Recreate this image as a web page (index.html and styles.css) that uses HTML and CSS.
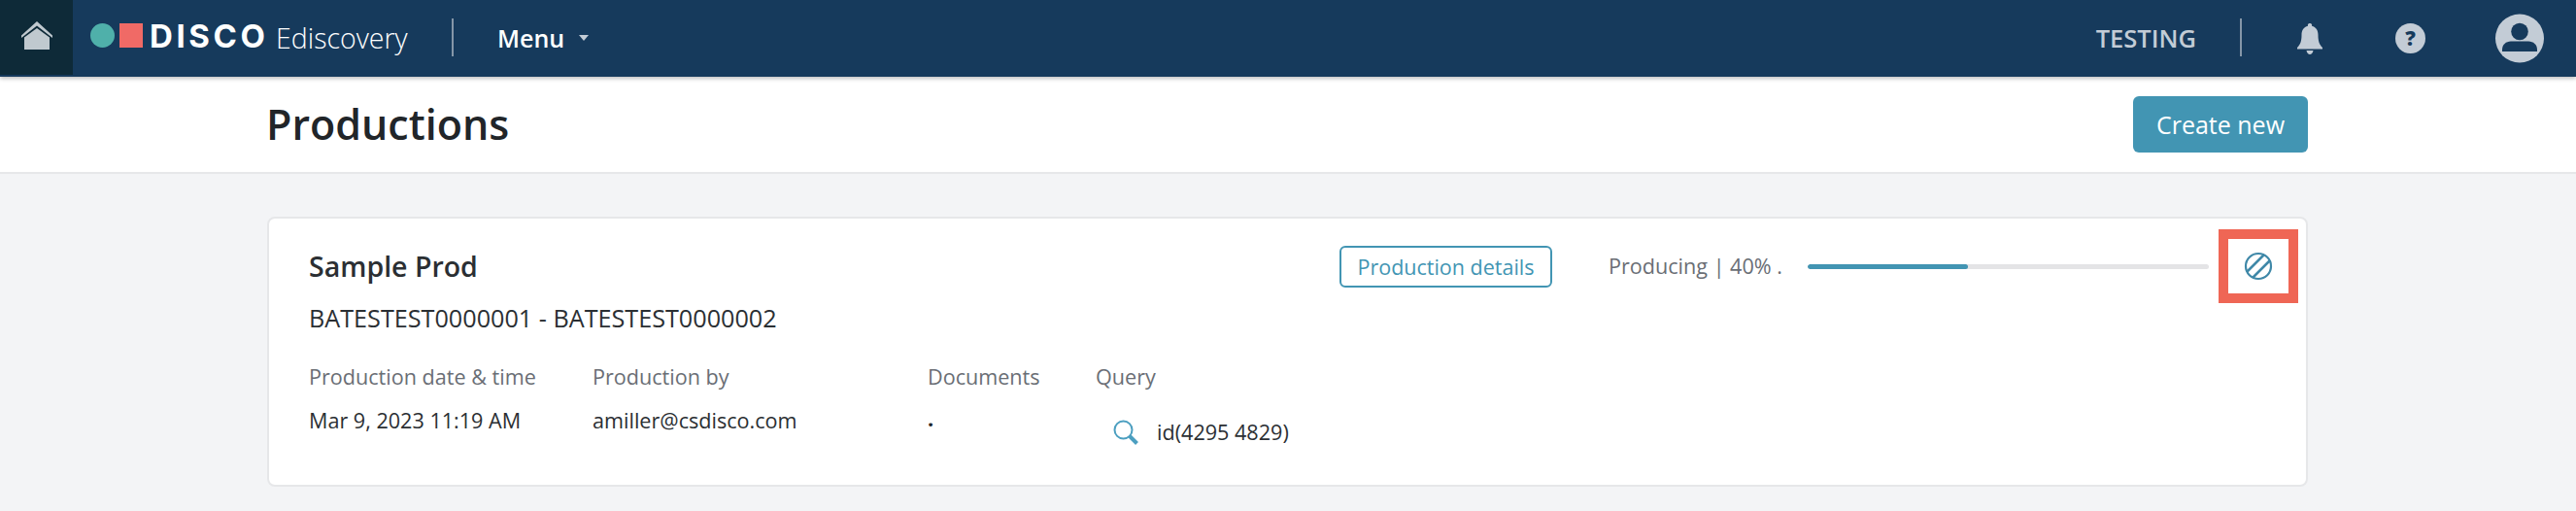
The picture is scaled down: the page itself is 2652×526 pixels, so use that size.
FILE: index.html
```html
<!DOCTYPE html>
<html lang="en">
<head>
<meta charset="utf-8">
<title>Productions</title>
<link rel="stylesheet" href="styles.css">
</head>
<body>
<nav class="navbar">
  <a class="home">
    <svg width="32" height="29" viewBox="0 0 32 29"><path class="home-roof" d="M0 14.500L16 0l16 14.500v2.500L16 4.500 0 17z"/><path class="home-body" d="M3 16.500L16 7l13 9.500V29H3z"/></svg>
  </a>
  <div class="logo">
    <span class="logo-dot"></span><span class="logo-square"></span>
    <span class="logo-name">DISCO</span><span class="logo-product">Ediscovery</span>
  </div>
  <span class="nav-divider nav-divider-left"></span>
  <a class="menu">Menu<span class="caret"></span></a>
  <div class="nav-right">
    <span class="tenant">TESTING</span>
    <span class="nav-divider"></span>
    <svg class="bell" width="26" height="32" viewBox="0 0 26 32"><path d="M13 0a2 2 0 0 1 2 2.700c4.500 1 6.500 4.700 6.500 9.300 0 6 1 9.500 4.500 13v1.500H0V25c3.500-3.500 4.500-7 4.500-13 0-4.600 2-8.300 6.500-9.300A2 2 0 0 1 13 0zM9.500 28h7c-.5 2.500-2 4-3.500 4s-3-1.500-3.500-4z"/></svg>
    <span class="help">?</span>
    <svg class="avatar" width="50" height="51" viewBox="0 0 50 51"><circle cx="25" cy="25.500" r="25" class="avatar-bg"/><circle cx="25" cy="18.500" r="8.800" class="avatar-head"/><path class="avatar-body" d="M7 39v-2c0-5 4-8.500 9-8.500h18c5 0 9 3.500 9 8.500v2z"/></svg>
  </div>
</nav>
<header class="page-header">
  <h1>Productions</h1>
  <button class="btn-create">Create new</button>
</header>
<main class="content">
  <section class="card">
    <div class="card-main">
      <h2>Sample Prod</h2>
      <div class="range">BATESTEST0000001 - BATESTEST0000002</div>
      <div class="meta">
        <div class="col col-date"><div class="label">Production date &amp; time</div><div class="value">Mar 9, 2023 11:19 AM</div></div>
        <div class="col col-by"><div class="label">Production by</div><div class="value">amiller@csdisco.com</div></div>
        <div class="col col-docs"><div class="label">Documents</div><div class="value value-dot">.</div></div>
        <div class="col"><div class="label">Query</div>
          <div class="query">
            <svg width="26" height="26" viewBox="0 0 26 26"><circle cx="10.500" cy="10.500" r="9" class="q-ring"/><path class="q-handle" d="M17 17l7.500 7.500"/></svg>
            <span>id(4295 4829)</span>
          </div>
        </div>
      </div>
    </div>
    <div class="status">
      <a class="btn-details">Production details</a>
      <span class="status-text">Producing | 40% .</span>
      <div class="progress"><div class="progress-fill" style="width:40%"></div></div>
      <div class="highlight">
        <svg width="30" height="30" viewBox="0 0 30 30"><circle cx="15" cy="15" r="13" class="hatch-ring"/><path class="hatch" d="M3 21L21 3M9 27L27 9"/></svg>
      </div>
    </div>
  </section>
</main>
</body>
</html>
```
FILE: styles.css
```css
* { box-sizing: border-box; }
html, body { margin: 0; padding: 0; }
body {
  width: 2652px;
  height: 526px;
  overflow: hidden;
  background: #f3f4f6;
  font-family: "Open Sans", "Liberation Sans", sans-serif;
  color: #212529;
}
.navbar {
  height: 79px;
  background: #163a5c;
  display: flex;
  align-items: center;
  box-shadow: 0 2px 4px rgba(0,0,0,.25);
  position: relative;
}
.home {
  width: 75px;
  height: 77px;
  align-self: flex-start;
  background: #0e2a38;
  display: flex;
  align-items: flex-start;
  justify-content: center;
  padding-top: 22px;
}
.home-roof { fill: #c0c9cf; }
.home-body { fill: #c0c9cf; }
.logo { display: flex; align-items: center; margin: 0 0 6px 18px; width: 327px; }
.logo-dot { width: 25px; height: 25px; border-radius: 50%; background: #4fb0aa; }
.logo-square { width: 24px; height: 25px; background: #f06a66; margin-left: 5px; }
.logo-name {
  font-family: Inter, "Open Sans", sans-serif;
  font-weight: 700;
  font-size: 33px;
  line-height: 32px;
  letter-spacing: 3.6px;
  color: #fff;
  margin-left: 7px;
  width: 130px;
}
.logo-product { font-size: 28.500px; font-weight: 300; color: #fff; line-height: 36px; margin-top: 5px; }
.nav-divider { width: 2px; height: 39px; margin-bottom: 2px; background: #8596a8; }
.nav-divider-left { margin-left: 45px; }
.menu {
  display: flex;
  align-items: center;
  margin: 0 0 2px 45px;
  color: #fff;
  font-size: 25px;
  font-weight: 600;
}
.caret {
  margin-left: 15px;
  width: 0;
  height: 0;
  border-left: 5px solid transparent;
  border-right: 5px solid transparent;
  border-top: 6px solid #c3ccd6;
}
.nav-right { margin-left: auto; display: flex; align-items: center; padding-right: 33px; }
.tenant { color: #c3ccd6; font-size: 25.500px; font-weight: 600; margin: 0 45px 2px 0; }
.bell { fill: #c3ccd6; margin-left: 57px; }
.help {
  width: 31px;
  height: 31px;
  border-radius: 50%;
  background: #c3ccd6;
  color: #163a5c;
  font-weight: 800;
  font-size: 21px;
  line-height: 31px;
  text-align: center;
  margin-left: 75px;
}
.avatar { margin-left: 72px; }
.avatar-bg { fill: #c3ccd6; }
.avatar-head { fill: #163a5c; }
.avatar-body { fill: #163a5c; }
.page-header {
  height: 100px;
  background: #fff;
  border-bottom: 2px solid #e6e7e9;
  display: flex;
  align-items: center;
  justify-content: space-between;
  padding: 0 276px 0 274px;
}
h1 { margin: 0; font-size: 43px; font-weight: 600; line-height: 54px; color: #212529; }
.btn-create {
  width: 180px;
  height: 58px;
  border: 0;
  border-radius: 6px;
  background: #4295b3;
  color: #fff;
  font-family: inherit;
  font-size: 25px;
}
.content { padding: 44px 276px 0 275px; }
.card {
  height: 278px;
  background: #fff;
  border: 2px solid #e6e7e9;
  border-radius: 8px;
  display: flex;
  justify-content: space-between;
  padding: 0 0 0 41px;
}
h2 { margin: 29px 0 0; font-size: 28.500px; font-weight: 600; line-height: 40px; color: #2b2f33; }
.range { font-size: 25.200px; line-height: 34px; margin-top: 16px; color: #2b2f33; }
.meta { display: flex; margin-top: 29px; }
.col-date { width: 292px; }
.col-by { width: 345px; }
.col-docs { width: 173px; }
.label { font-size: 21.600px; line-height: 30px; color: #6a6e75; }
.value { font-size: 21.600px; line-height: 30px; margin-top: 15px; color: #2b2f33; }
.value-dot { font-weight: 700; margin-top: 13px; color: #212529; }
.query { display: flex; align-items: center; margin: 27px 0 0 18px; gap: 19px; font-size: 21.600px; line-height: 30px; color: #2b2f33; }
.q-ring { fill: none; stroke: #4c9fc0; stroke-width: 2; }
.q-handle { fill: none; stroke: #4c9fc0; stroke-width: 4; }
.status { display: flex; align-items: flex-start; padding: 11px 8px 0 0; }
.btn-details {
  height: 43px;
  width: 219px;
  margin-top: 17px;
  border: 2px solid #4295b3;
  border-radius: 6px;
  color: #4295b3;
  font-size: 21.500px;
  line-height: 39px;
  text-align: center;
}
.status-text { margin: 23px 0 0 58px; width: 205px; font-size: 21.600px; line-height: 30px; color: #6a6e75; }
.progress { width: 413px; height: 5px; margin-top: 36px; border-radius: 3px; background: #e4e4e6; overflow: hidden; }
.progress-fill { height: 100%; background: #4295b3; border-radius: 3px; }
.highlight {
  width: 82px;
  height: 76px;
  margin-left: 10px;
  border: 10px solid #ef6655;
  background: #fff;
  display: flex;
  align-items: center;
  justify-content: center;
}
.hatch-ring { fill: none; stroke: #3f88a8; stroke-width: 2.200; }
.hatch { fill: none; stroke: #3f88a8; stroke-width: 2.500; }
```
